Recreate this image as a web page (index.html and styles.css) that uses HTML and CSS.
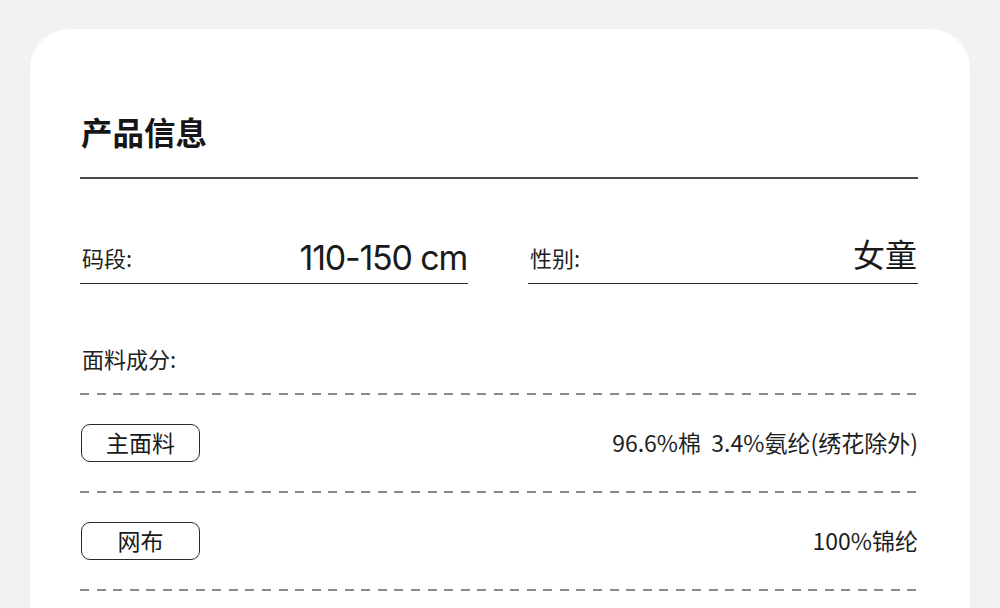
FILE: index.html
```html
<!DOCTYPE html>
<html lang="zh-CN">
<head>
<meta charset="utf-8">
<title>产品信息</title>
<link rel="stylesheet" href="styles.css">
</head>
<body>
<main class="card">
  <h1 class="title">产品信息</h1>
  <div class="rule"></div>
  <div class="fields">
    <div class="field">
      <span class="label">码段:</span>
      <span class="value value-latin">110-150 cm</span>
    </div>
    <div class="field">
      <span class="label">性别:</span>
      <span class="value">女童</span>
    </div>
  </div>
  <div class="section-label">面料成分:</div>
  <div class="dash"></div>
  <div class="comp-row">
    <span class="tag">主面料</span>
    <span class="comp-text">96.6%棉&nbsp;&nbsp;3.4%氨纶(绣花除外)</span>
  </div>
  <div class="dash"></div>
  <div class="comp-row">
    <span class="tag">网布</span>
    <span class="comp-text">100%锦纶</span>
  </div>
  <div class="dash"></div>
</main>
</body>
</html>
```

FILE: styles.css
```css
* { box-sizing: border-box; }
html, body {
  margin: 0;
  padding: 0;
  background: #f2f2f2;
  height: 100%;
  overflow: hidden;
}
body {
  font-family: "Noto Sans CJK SC", "Noto Sans", sans-serif;
  color: #1e1e1e;
}
.card {
  margin: 29px 0 0 30px;
  width: 940px;
  min-height: 700px;
  background: #ffffff;
  border-radius: 40px;
  padding: 82px 52px 0 50px;
}
.title {
  margin: 0;
  font-size: 31.5px;
  line-height: 40px;
  font-weight: 700;
  color: #161616;
  padding-left: 1px;
}
.rule {
  margin-top: 26px;
  height: 2px;
  background: #4a4a4a;
}
.fields {
  display: grid;
  grid-template-columns: 388px 390px;
  column-gap: 60px;
  margin-top: 44px;
}
.field {
  display: flex;
  justify-content: space-between;
  align-items: flex-end;
  height: 61px;
  border-bottom: 1px solid #2a2a2a;
  padding: 0 1px 0 2px;
}
.label {
  font-size: 22px;
  line-height: 1;
  color: #222;
  margin-bottom: 15px;
}
.value {
  font-size: 32px;
  line-height: 1;
  color: #1a1a1a;
  margin-bottom: 14px;
}
.value-latin {
  font-family: "Inter", "Liberation Sans", sans-serif;
  font-size: 34px;
  font-weight: 400;
  letter-spacing: -1.2px;
  margin-bottom: 8px;
}
.section-label {
  margin-top: 59px;
  line-height: 30px;
  font-size: 22px;
  color: #222;
  padding-left: 2px;
  margin-bottom: 20px;
}
.dash {
  height: 2px;
  background: repeating-linear-gradient(to right, #8a8a8a 0 9px, transparent 9px 16.55px);
}
.comp-row {
  height: 96px;
  display: flex;
  align-items: center;
  justify-content: space-between;
}
.tag {
  width: 119px;
  height: 38px;
  margin-left: 1px;
  margin-bottom: 1px;
  border: 1px solid #2a2a2a;
  border-radius: 9px;
  display: flex;
  align-items: center;
  justify-content: center;
  font-size: 23px;
  color: #1a1a1a;
  line-height: 1;
}
.comp-text {
  font-size: 23px;
  line-height: 1;
  color: #1e1e1e;
  margin-bottom: 2px;
}
```
